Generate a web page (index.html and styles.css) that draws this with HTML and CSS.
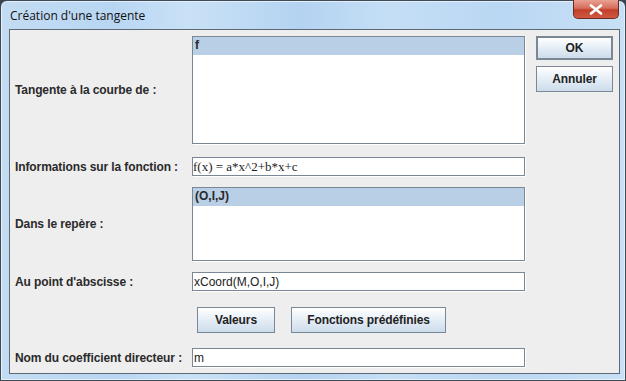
FILE: index.html
```html
<!DOCTYPE html>
<html lang="fr">
<head>
    <meta charset="UTF-8">
    <meta name="viewport" content="width=device-width, initial-scale=1.0">
    <title>Création d'une tangente</title>
    <link rel="stylesheet" href="styles.css">
</head>
<body>
    <div class="window">
        <div class="titlebar">
            <span class="title">Création d'une tangente</span>
            <button class="close" title="Fermer">
                <svg width="14" height="11" viewBox="0 0 14 11"><path d="M2 1.5 L12 9.5 M12 1.5 L2 9.5" stroke="#fff" stroke-width="2.6" stroke-linecap="round"/></svg>
            </button>
        </div>

        <div class="panel">
            <div class="row row-first">
                <label class="label">Tangente à la courbe de :</label>
                <div class="list list-tall">
                    <div class="item selected">f</div>
                </div>
                <div class="actions">
                    <button class="btn btn-default">OK</button>
                    <button class="btn">Annuler</button>
                </div>
            </div>

            <div class="row gap-13">
                <label class="label">Informations sur la fonction :</label>
                <input class="field field-serif" type="text" value="f(x) = a*x^2+b*x+c">
            </div>

            <div class="row gap-11">
                <label class="label">Dans le repère :</label>
                <div class="list list-short">
                    <div class="item selected">(O,I,J)</div>
                </div>
            </div>

            <div class="row gap-11">
                <label class="label">Au point d'abscisse :</label>
                <input class="field" type="text" value="xCoord(M,O,I,J)">
            </div>

            <div class="row gap-16">
                <span></span>
                <div class="toolbar">
                    <button class="btn btn-wide-1">Valeurs</button>
                    <button class="btn btn-wide-2">Fonctions prédéfinies</button>
                </div>
            </div>

            <div class="row gap-15">
                <label class="label">Nom du coefficient directeur :</label>
                <input class="field" type="text" value="m">
            </div>
        </div>
    </div>
</body>
</html>
```

FILE: styles.css
```css
* { box-sizing: border-box; }
body { margin: 0; background: #3a4550; font-family: "Liberation Sans", Arial, sans-serif; }

.window { width: 626px; height: 381px; border: 1px solid #3f4a55; border-radius: 7px 7px 0 0;
    background: linear-gradient(90deg, #c3dcf2 0%, #b8d6f3 18%, #c9e1f6 30%, #b4d3f1 48%, #c4def5 62%, #bad7f3 80%, #c7e0f5 100%);
    box-shadow: inset 0 0 0 1px #e4f0fb; }
.titlebar { height: 28px; display: flex; align-items: flex-start; justify-content: space-between; padding-left: 9px; }
.title { font-family: "Open Sans", "DejaVu Sans", sans-serif; font-size: 12px; color: #111; margin-top: 6px; }
.close { width: 46px; height: 19px; margin: -1px 6px 0 0; border: 1px solid #6e2a22; border-top: none; border-radius: 0 0 5px 5px;
    background: linear-gradient(#e9a093 0%, #d66e5c 45%, #c2402b 55%, #cf5a40 100%); display: flex; align-items: center; justify-content: center; padding: 0; }

.panel { width: 611px; height: 345px; margin-left: 8px; border: 1px solid #5d6975; background: #eeeeee; padding-top: 6px; }

.row { display: grid; grid-template-columns: 182px 333px 78px; align-items: center; }
.row-first { align-items: stretch; }
.gap-11 { margin-top: 11px; }
.gap-13 { margin-top: 13px; }
.gap-15 { margin-top: 15px; }
.gap-16 { margin-top: 16px; }

.label { padding-left: 5px; font-size: 12px; font-weight: bold; color: #2a2a2a; align-self: center; white-space: nowrap; letter-spacing: -0.1px; }

.list { background: #fff; border: 1px solid #7a8795; box-shadow: 1px 1px 0 #fff; }
.list-tall { height: 108px; }
.list-short { height: 74px; }
.item { height: 18px; line-height: 17px; padding-left: 2px; font-size: 12px; font-weight: bold; color: #2a2a2a; }
.selected { background: #b8cfe5; }

.field { width: 333px; height: 19px; border: 1px solid #7a8795; box-shadow: 1px 1px 0 #fff; background: #fff; padding: 0 1px; font-family: "Liberation Sans", Arial, sans-serif; font-size: 12px; color: #222; outline: none; }
.field-serif { font-family: "Liberation Serif", "Times New Roman", serif; font-size: 13px; padding: 0; }

.actions { display: flex; flex-direction: column; gap: 6px; margin-left: 11px; width: 77px; }
.btn { height: 26px; border: 1px solid #7a8795; background: linear-gradient(#ffffff 0%, #e7eff7 45%, #cddceb 100%);
    font-family: "Liberation Sans", Arial, sans-serif; font-size: 12px; font-weight: bold; color: #222; padding: 0; letter-spacing: -0.1px; }
.actions .btn { width: 77px; }
.btn-default { height: 24px; border: 2px solid #7a8795; }
.toolbar { display: flex; gap: 16px; padding-left: 5px; }
.btn-wide-1 { width: 78px; }
.btn-wide-2 { width: 155px; }
```
